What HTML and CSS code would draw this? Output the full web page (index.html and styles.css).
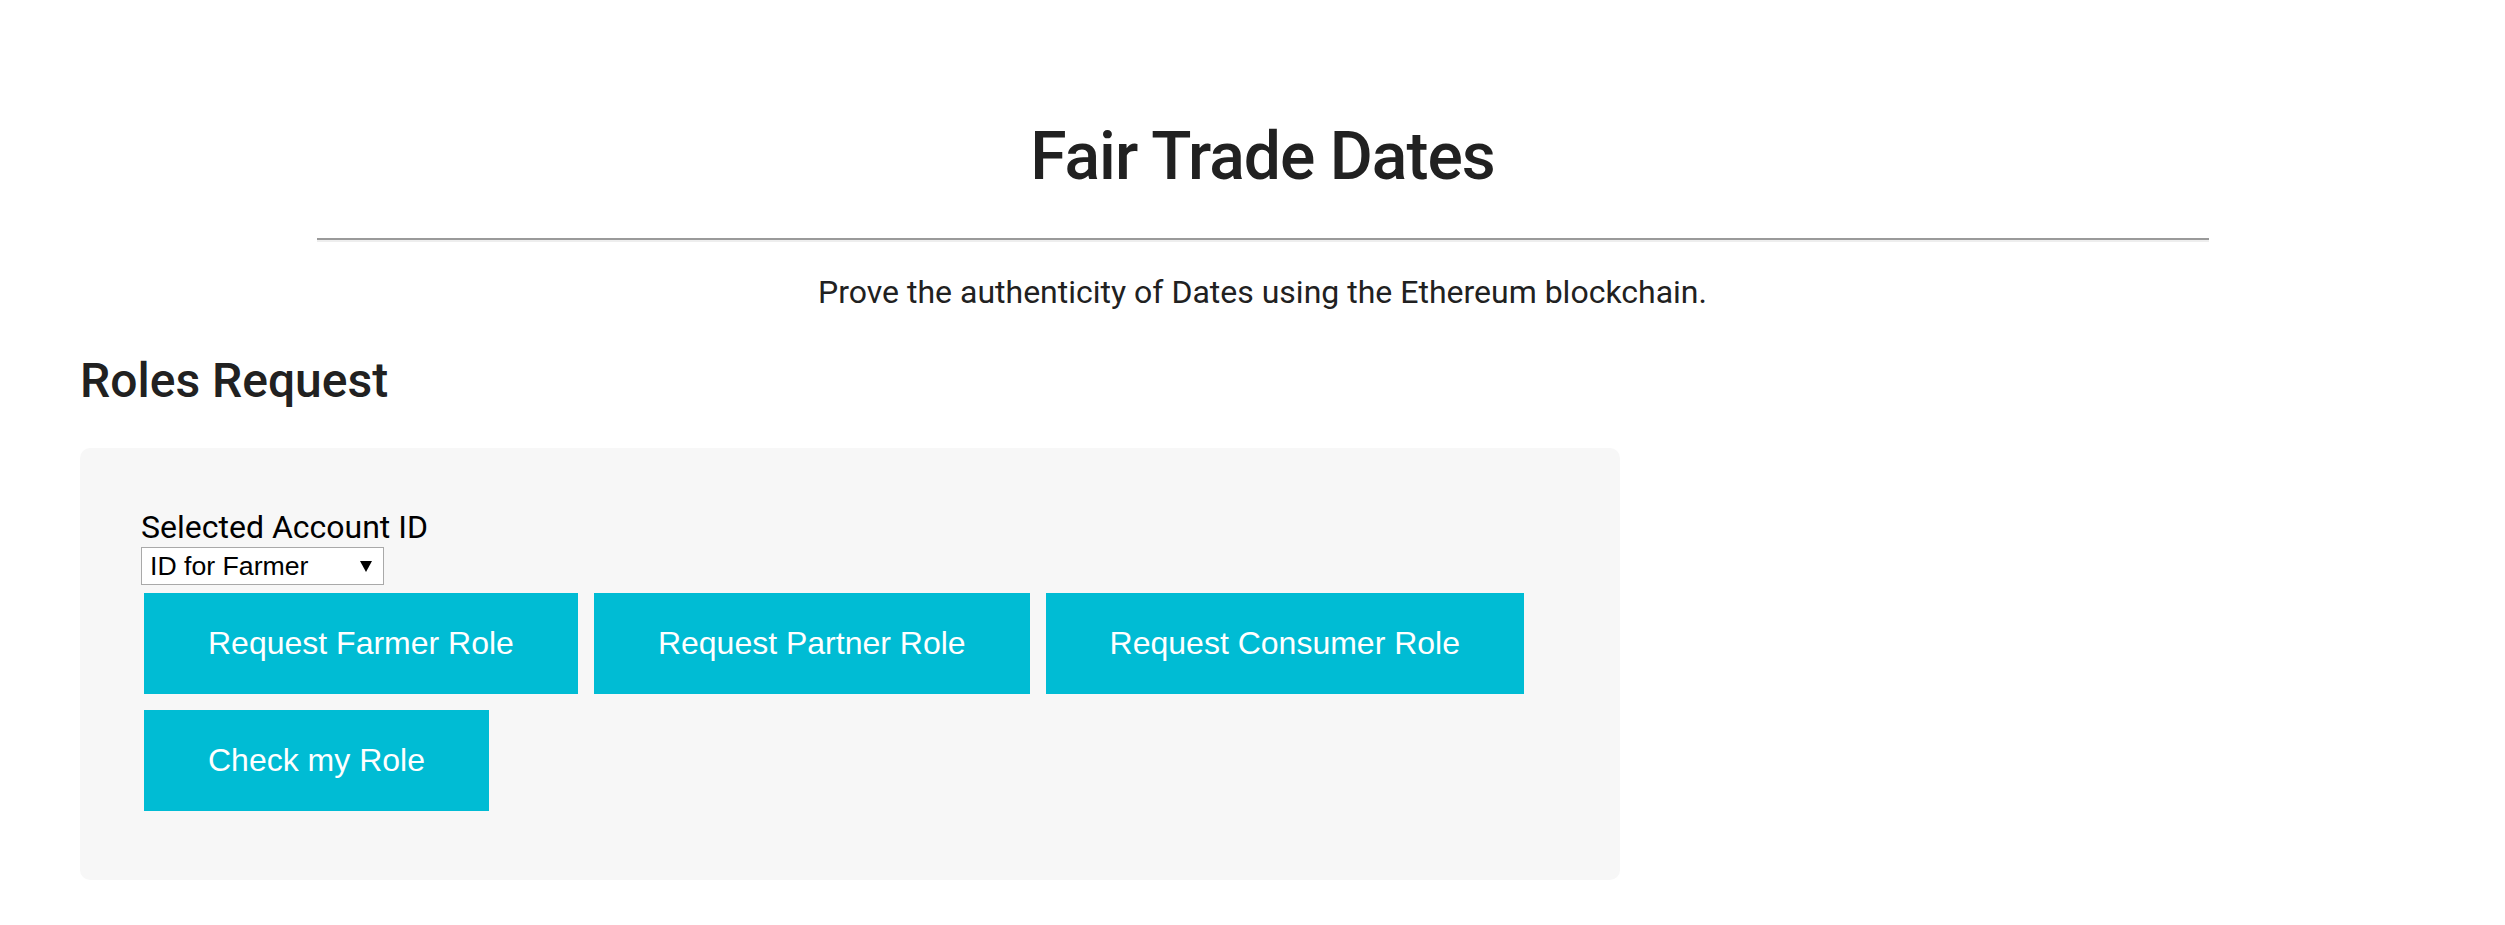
FILE: index.html
```html
<!DOCTYPE html>
<html lang="en">
<head>
<meta charset="utf-8">
<title>Fair Trade Dates</title>
<link rel="stylesheet" href="styles.css">
</head>
<body>
<div class="container">
  <header class="intro">
    <h1 class="title">Fair Trade Dates</h1>
    <hr class="divider">
    <p class="subtitle">Prove the authenticity of Dates using the Ethereum blockchain.</p>
  </header>
  <h2 class="section-title">Roles Request</h2>
  <section class="panel">
    <label class="field-label" for="account">Selected Account ID</label>
    <div class="select-wrap">
      <select id="account" class="account-select">
        <option>ID for Farmer</option>
        <option>ID for Partner</option>
        <option>ID for Consumer</option>
      </select>
    </div>
    <div class="actions">
      <button class="btn">Request Farmer Role</button>
      <button class="btn">Request Partner Role</button>
      <button class="btn">Request Consumer Role</button>
      <button class="btn">Check my Role</button>
    </div>
  </section>
</div>
</body>
</html>
```
FILE: styles.css
```css
html, body {
  margin: 0;
  padding: 0;
  background: #ffffff;
}
body {
  font-family: Roboto, "Noto Sans", Arial, sans-serif;
  color: #212121;
}
.container {
  margin-left: 80px;
  width: 2365px;
}
.intro {
  text-align: center;
}
.title {
  margin: 117px 0 0;
  font-size: 66px;
  line-height: 80px;
  letter-spacing: -1px;
  font-weight: 500;
  color: #212121;
}
.divider {
  width: 80%;
  margin: 41px auto 0;
  height: 0;
  border: none;
  border-top: 2px solid #9a9a9a;
  border-bottom: 2px solid #eeeeee;
}
.subtitle {
  margin: 32px 0 0;
  font-size: 32px;
  line-height: 36px;
  color: #212121;
}
.section-title {
  margin: 43px 0 0;
  font-size: 48px;
  line-height: 56px;
  font-weight: 500;
  color: #212121;
}
.panel {
  margin-top: 39px;
  width: 1540px;
  box-sizing: border-box;
  background: #f7f7f7;
  border-radius: 10px;
  padding: 61px 60px 69px 61px;
}
.field-label {
  display: block;
  font-size: 32px;
  line-height: 36px;
  color: #000000;
}
.select-wrap {
  position: relative;
  width: 243px;
  margin-top: 2px;
}
.select-wrap::after {
  content: "";
  position: absolute;
  right: 12px;
  top: 14px;
  width: 0;
  height: 0;
  border-left: 6.5px solid transparent;
  border-right: 6.5px solid transparent;
  border-top: 11px solid #000000;
  pointer-events: none;
}
.account-select {
  -webkit-appearance: none;
  appearance: none;
  display: block;
  width: 243px;
  height: 38px;
  box-sizing: border-box;
  margin: 0;
  padding: 0 0 0 8px;
  border: 1px solid #a9a9a9;
  border-radius: 0;
  background: #ffffff;
  font-family: "Liberation Sans", Arial, sans-serif;
  font-size: 26.67px;
  color: #000000;
}
.actions {
  display: flex;
  flex-wrap: wrap;
  gap: 16px;
  margin-top: 8px;
  padding-left: 3px;
}
.btn {
  background: #00bcd4;
  color: #ffffff;
  border: none;
  border-radius: 0;
  margin: 0;
  padding: 32px 64px;
  font-family: "Liberation Sans", Arial, sans-serif;
  font-size: 32px;
  line-height: normal;
  cursor: pointer;
}
```
